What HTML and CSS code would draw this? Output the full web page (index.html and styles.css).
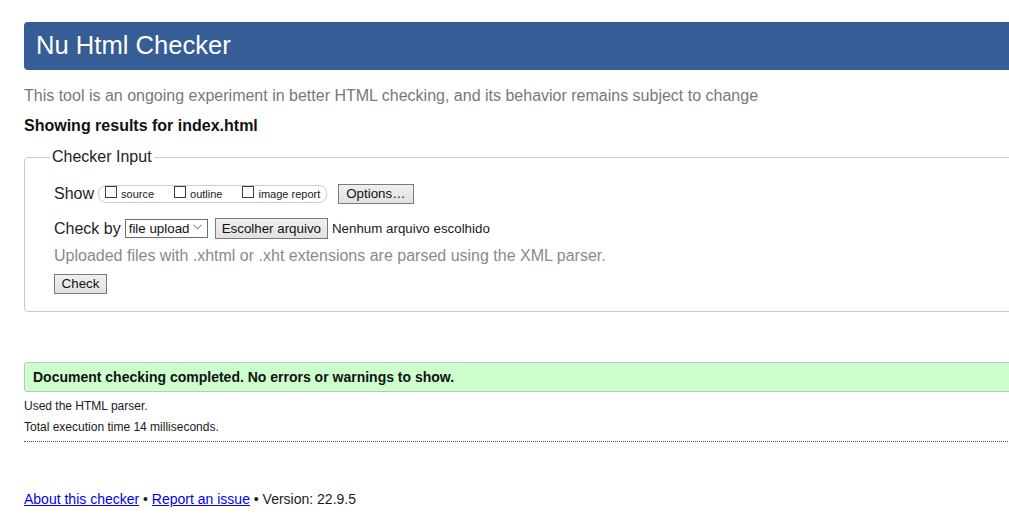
FILE: index.html
```html
<!DOCTYPE html>
<html lang="en">
<head>
<meta charset="utf-8">
<title>Showing results for index.html - Nu Html Checker</title>
<link rel="stylesheet" href="styles.css">
</head>
<body>
<div class="page">
  <h1 class="title">Nu Html Checker</h1>
  <p class="about">This tool is an ongoing experiment in better HTML checking, and its behavior remains subject to change</p>
  <p class="results-for">Showing results for index.html</p>

  <fieldset class="input">
    <legend class="input-legend">Checker Input</legend>
    <div class="row row-show">
      <span class="row-label">Show</span>
      <span class="show-box">
        <label class="opt"><input type="checkbox" class="cb"><span class="opt-text">source</span></label>
        <label class="opt"><input type="checkbox" class="cb"><span class="opt-text">outline</span></label>
        <label class="opt opt-last"><input type="checkbox" class="cb"><span class="opt-text">image report</span></label>
      </span>
      <button type="button" class="btn btn-options">Options…</button>
    </div>
    <div class="row row-checkby">
      <span class="row-label">Check by</span>
      <span class="select-wrap">
        <select class="select"><option>file upload</option></select>
        <svg class="chevron" width="9" height="6" viewBox="0 0 9 6"><path d="M0.5 0.8 L4.5 4.8 L8.5 0.8" fill="none" stroke="#8a8a8a" stroke-width="1.1"/></svg>
      </span>
      <button type="button" class="btn btn-file">Escolher arquivo</button>
      <span class="file-status">Nenhum arquivo escolhido</span>
    </div>
    <p class="note">Uploaded files with .xhtml or .xht extensions are parsed using the XML parser.</p>
    <div class="row row-submit">
      <button type="button" class="btn btn-check">Check</button>
    </div>
  </fieldset>

  <p class="success">Document checking completed. No errors or warnings to show.</p>

  <div class="details">
    <p class="detail">Used the HTML parser.</p>
    <p class="detail">Total execution time 14 milliseconds.</p>
  </div>

  <p class="footer"><a href="#" class="link">About this checker</a> • <a href="#" class="link">Report an issue</a> • Version: 22.9.5</p>
</div>
</body>
</html>
```

FILE: styles.css
```css
html {
  overflow: hidden;
  background: #fff;
}

body {
  margin: 0;
  padding: 0 0 0 24px;
  font-family: Arial, "Liberation Sans", sans-serif;
  color: #1a1a1a;
  background: #fff;
}

.page {
  width: 1100px;
  padding-top: 22px;
}

.title {
  margin: 0;
  height: 48px;
  box-sizing: border-box;
  padding-left: 12px;
  font-size: 25.6px;
  font-weight: normal;
  line-height: 46px;
  color: #fff;
  background: #365d95;
  border-radius: 4px;
}

.about {
  margin: 17px 0 0;
  font-size: 16px;
  line-height: 18px;
  color: #787878;
}

.results-for {
  margin: 12px 0 0;
  font-size: 16px;
  line-height: 18px;
  font-weight: bold;
  color: #111;
}

.input {
  margin: 13px 0 0;
  padding: 0 0 17px 29px;
  border: 1px solid #cccccc;
  border-radius: 4px;
  min-inline-size: 0;
}

.input-legend {
  margin-left: -4px;
  padding: 0 2px;
  font-size: 16px;
  line-height: 18px;
  color: #222;
}

.row {
  display: flex;
  align-items: center;
}

.row-label {
  font-size: 16px;
  line-height: 18px;
  color: #1f1f2a;
  margin-right: 4px;
}

.row-show {
  height: 20px;
  margin-top: 18px;
}

.show-box {
  display: flex;
  align-items: flex-start;
  height: 18px;
  box-sizing: border-box;
  padding: 0 6px 0 6px;
  border: 1px solid #cccccc;
  border-radius: 8px;
}

.opt {
  display: flex;
  align-items: flex-start;
  margin-right: 20px;
}

.opt-last {
  margin-right: 0;
}

.cb {
  -webkit-appearance: none;
  appearance: none;
  width: 12px;
  height: 12px;
  box-sizing: border-box;
  margin: 0 4px 0 0;
  border: 1px solid #3c3c3c;
  background: #fff;
}

.opt-text {
  font-size: 11px;
  line-height: 12px;
  margin-top: 2px;
  color: #1a1a1a;
}

.btn {
  height: 20px;
  box-sizing: border-box;
  padding: 0 6px;
  font-family: Arial, "Liberation Sans", sans-serif;
  font-size: 13.33px;
  line-height: 16px;
  color: #111;
  background: linear-gradient(#f0f0f0, #e1e1e1);
  border: 1px solid #7a7a7a;
  border-radius: 0;
}

.btn-options {
  margin-left: 11px;
  padding: 0 7px;
}

.row-checkby {
  height: 21px;
  margin-top: 14px;
}

.select-wrap {
  position: relative;
  display: block;
  height: 19px;
}

.select {
  -webkit-appearance: none;
  appearance: none;
  display: block;
  width: 83px;
  height: 19px;
  box-sizing: border-box;
  margin: 0;
  padding: 0 0 0 3px;
  font-family: Arial, "Liberation Sans", sans-serif;
  font-size: 13.33px;
  line-height: 17px;
  color: #111;
  background: #fff;
  border: 1px solid #6e6e6e;
  border-radius: 0;
}

.chevron {
  position: absolute;
  left: 68px;
  top: 5px;
}

.btn-file {
  height: 21px;
  margin-left: 7px;
}

.file-status {
  margin-left: 4px;
  font-size: 13.33px;
  line-height: 16px;
  color: #1a1a1a;
}

.note {
  margin: 8px 0 0;
  font-size: 16px;
  line-height: 18px;
  color: #8a8a8a;
}

.row-submit {
  margin-top: 9px;
}

.btn-check {
  width: 53px;
}

.success {
  margin: 50px 0 0;
  padding: 6px 8px;
  font-size: 14px;
  line-height: 16px;
  font-weight: bold;
  color: #111;
  background: #ccffcc;
  border: 1px solid #c2c2c2;
  border-radius: 3px;
}

.details {
  padding-bottom: 7px;
  border-bottom: 1px dotted #555;
}

.detail {
  margin: 7px 0 0;
  font-size: 12px;
  line-height: 14px;
  color: #1a1a1a;
}

.footer {
  margin: 49px 0 0;
  font-size: 14px;
  line-height: 16px;
  color: #1a1a1a;
}

.link {
  color: #0000ee;
  text-decoration: underline;
}
```
